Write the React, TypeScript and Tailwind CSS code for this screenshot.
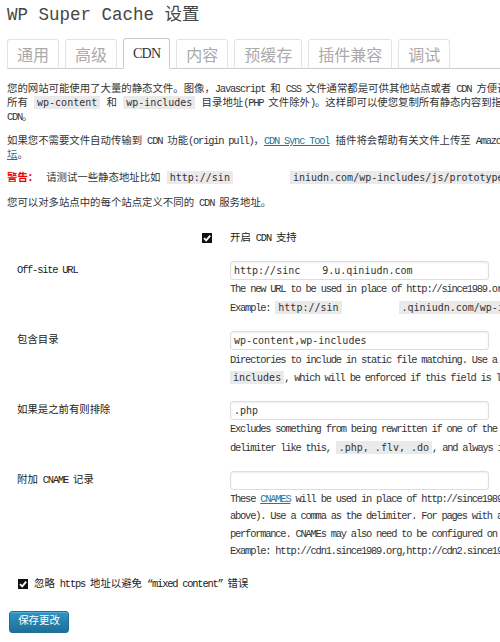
import React from 'react';

// latin runs: SimSun-like half width
const L = ({ children }: { children: React.ReactNode }) => (
  <span className="tracking-[-1.2px]">{children}</span>
);

const Code = ({ children }: { children: React.ReactNode }) => (
  <code className="bg-[#eaeaea] px-[3px] py-[1px] font-['DejaVu_Sans_Mono',monospace] text-[10px] tracking-normal text-[#333]">
    {children}
  </code>
);

const Gap = ({ w }: { w: string }) => <span className={`inline-block h-[14px] bg-white align-middle ${w}`} />;

const Link = ({ children }: { children: React.ReactNode }) => (
  <a className="text-[#21759b] underline">{children}</a>
);

const CheckBox = () => (
  <svg width="10" height="10" viewBox="0 0 10 10">
    <rect x="0" y="0" width="10" height="10" fill="#111" />
    <path d="M2 5.2 L4.2 7.4 L8.2 2.6" stroke="#fff" strokeWidth="1.8" fill="none" />
  </svg>
);

const tabs = ['通用', '高级', 'CDN', '内容', '预缓存', '插件兼容', '调试'];

function Field({ label, value, children }: { label: React.ReactNode; value: React.ReactNode; children: React.ReactNode }) {
  return (
    <div className="grid grid-cols-[223px_auto] items-start">
      <div className="pl-[10px] leading-[19px] text-[#222]">{label}</div>
      <div>
        <div className="flex h-[19px] w-[259px] items-center rounded-[3px] border border-[#ddd] bg-white px-[3px] font-['DejaVu_Sans_Mono',monospace] text-[10px] whitespace-nowrap text-[#333] shadow-[inset_0_1px_2px_rgba(0,0,0,0.07)]">
          {value}
        </div>
        <div className="mt-[1px] leading-[17.3px] tracking-[-1.2px] whitespace-nowrap text-[#333]">{children}</div>
      </div>
    </div>
  );
}

export default function App() {
  return (
    <div className="relative h-[642px] w-[500px] overflow-hidden bg-white pl-[7px] font-['Liberation_Mono','Noto_Sans_CJK_SC',monospace] text-[10.4px] text-[#333]">
      <h1 className="mt-[5px] text-[17.5px] leading-[20px] whitespace-nowrap text-[#464646]">WP Super Cache 设置</h1>

      <div className="mt-[13px] flex w-[700px] items-end gap-[6px] border-b border-[#ccc]">
        {tabs.map((t) => (
          <div
            key={t}
            className={`-mb-px flex items-center rounded-t-[3px] border px-[9px] text-[16px] whitespace-nowrap font-['Noto_Sans_CJK_SC',sans-serif] ${
              t === 'CDN'
                ? 'h-[31px] border-[#ccc] border-b-white bg-white text-[#333]'
                : 'h-[30px] border-[#e3e3e3] border-b-[#ccc] bg-white text-[#aaa]'
            }`}
          >
            {t === 'CDN' ? (
              <span className="font-['Liberation_Serif',serif] text-[14px] tracking-[-0.8px]">CDN</span>
            ) : (
              t
            )}
          </div>
        ))}
      </div>

      <div className="mt-[13px] leading-[14px] whitespace-nowrap">
        <div>
          您的网站可能使用了大量的静态文件。图像，<L>Javascript </L>和<L> CSS </L>文件通常都是可供其他站点或者<L> CDN </L>方便调用的静态文件。
        </div>
        <div>
          所有 <Code>wp-content</Code> 和 <Code>wp-includes</Code> 目录地址<L>(PHP </L>文件除外<L>)</L>。这样即可以使您复制所有静态内容到指定的服务器上。
        </div>
        <div>
          <L>CDN</L>。
        </div>
      </div>

      <div className="mt-[10px] leading-[14px] whitespace-nowrap">
        <div>
          如果您不需要文件自动传输到<L> CDN </L>功能<L>(origin pull)</L>，<Link><L>CDN Sync Tool</L></Link> 插件将会帮助有关文件上传至<L> Amazon S3 </L>等服务。详情请访问<Link>论</Link>
        </div>
        <div>
          <Link>坛</Link>。
        </div>
      </div>

      <div className="mt-[9px] leading-[14px] whitespace-nowrap">
        <span className="font-bold text-[#e00]">警告：</span>
        <span className="ml-[8px]">请测试一些静态地址比如 </span>
        <Code>http://sin</Code>
        <Gap w="w-[57px]" />
        <Code>iniudn.com/wp-includes/js/prototype.js</Code>
        <span> 确认可以正常访问。</span>
      </div>

      <div className="mt-[11px] leading-[14px] whitespace-nowrap">
        您可以对多站点中的每个站点定义不同的<L> CDN </L>服务地址。
      </div>

      <div className="mt-[21px] grid grid-cols-[223px_auto] items-center leading-[14px]">
        <div className="flex justify-end pr-[18px]">
          <CheckBox />
        </div>
        <div className="text-[#222]">
          开启<L> CDN </L>支持
        </div>
      </div>

      <div className="mt-[16px] flex flex-col gap-[14px]">
        <Field
          label={<L>Off-site URL</L>}
          value={
            <>
              <span>http://sinc</span>
              <Gap w="w-[22px]" />
              <span>9.u.qiniudn.com</span>
            </>
          }
        >
          <div>The new URL to be used in place of http://since1989.org for rewriting. No trailing / please.</div>
          <div>
            Example: <Code>http://sin</Code>
            <Gap w="w-[57px]" />
            <Code>.qiniudn.com/wp-includes/js/prototype.js</Code>.
          </div>
        </Field>

        <Field label="包含目录" value="wp-content,wp-includes">
          <div>
            Directories to include in static file matching. Use a comma as the delimiter. Default is <Code>wp-content, wp-</Code>
          </div>
          <div>
            <Code>includes</Code>, which will be enforced if this field is left empty.
          </div>
        </Field>

        <Field label="如果是之前有则排除" value=".php">
          <div>Excludes something from being rewritten if one of the strings is found in the match. Use a comma as the</div>
          <div>
            delimiter like this, <Code>.php, .flv, .do</Code>, and always include <Code>.php</Code> (default).
          </div>
        </Field>

        <Field
          label={
            <>
              附加<L> CNAME </L>记录
            </>
          }
          value=""
        >
          <div>
            These <Link>CNAMES</Link> will be used in place of http://since1989.org for rewriting (in addition to the off-site URL
          </div>
          <div>above). Use a comma as the delimiter. For pages with a large number of static files, this can improve browser</div>
          <div>performance. CNAMEs may also need to be configured on your CDN.</div>
          <div>Example: http://cdn1.since1989.org,http://cdn2.since1989.org,http://cdn3.since1989.org</div>
        </Field>
      </div>

      <div className="mt-[17px] flex items-center gap-[6px] pl-[11px] leading-[14px] whitespace-nowrap text-[#222]">
        <CheckBox />
        <span>
          忽略<L> https </L>地址以避免<L> “mixed content” </L>错误
        </span>
      </div>

      <button className="mt-[20px] ml-[2px] h-[22px] w-[60px] rounded-[3px] border border-[#1e6f98] bg-gradient-to-b from-[#2e95c6] to-[#1f6f97] text-[10.4px] text-white shadow-[inset_0_1px_0_rgba(120,200,230,0.5)]">
        保存更改
      </button>
    </div>
  );
}
